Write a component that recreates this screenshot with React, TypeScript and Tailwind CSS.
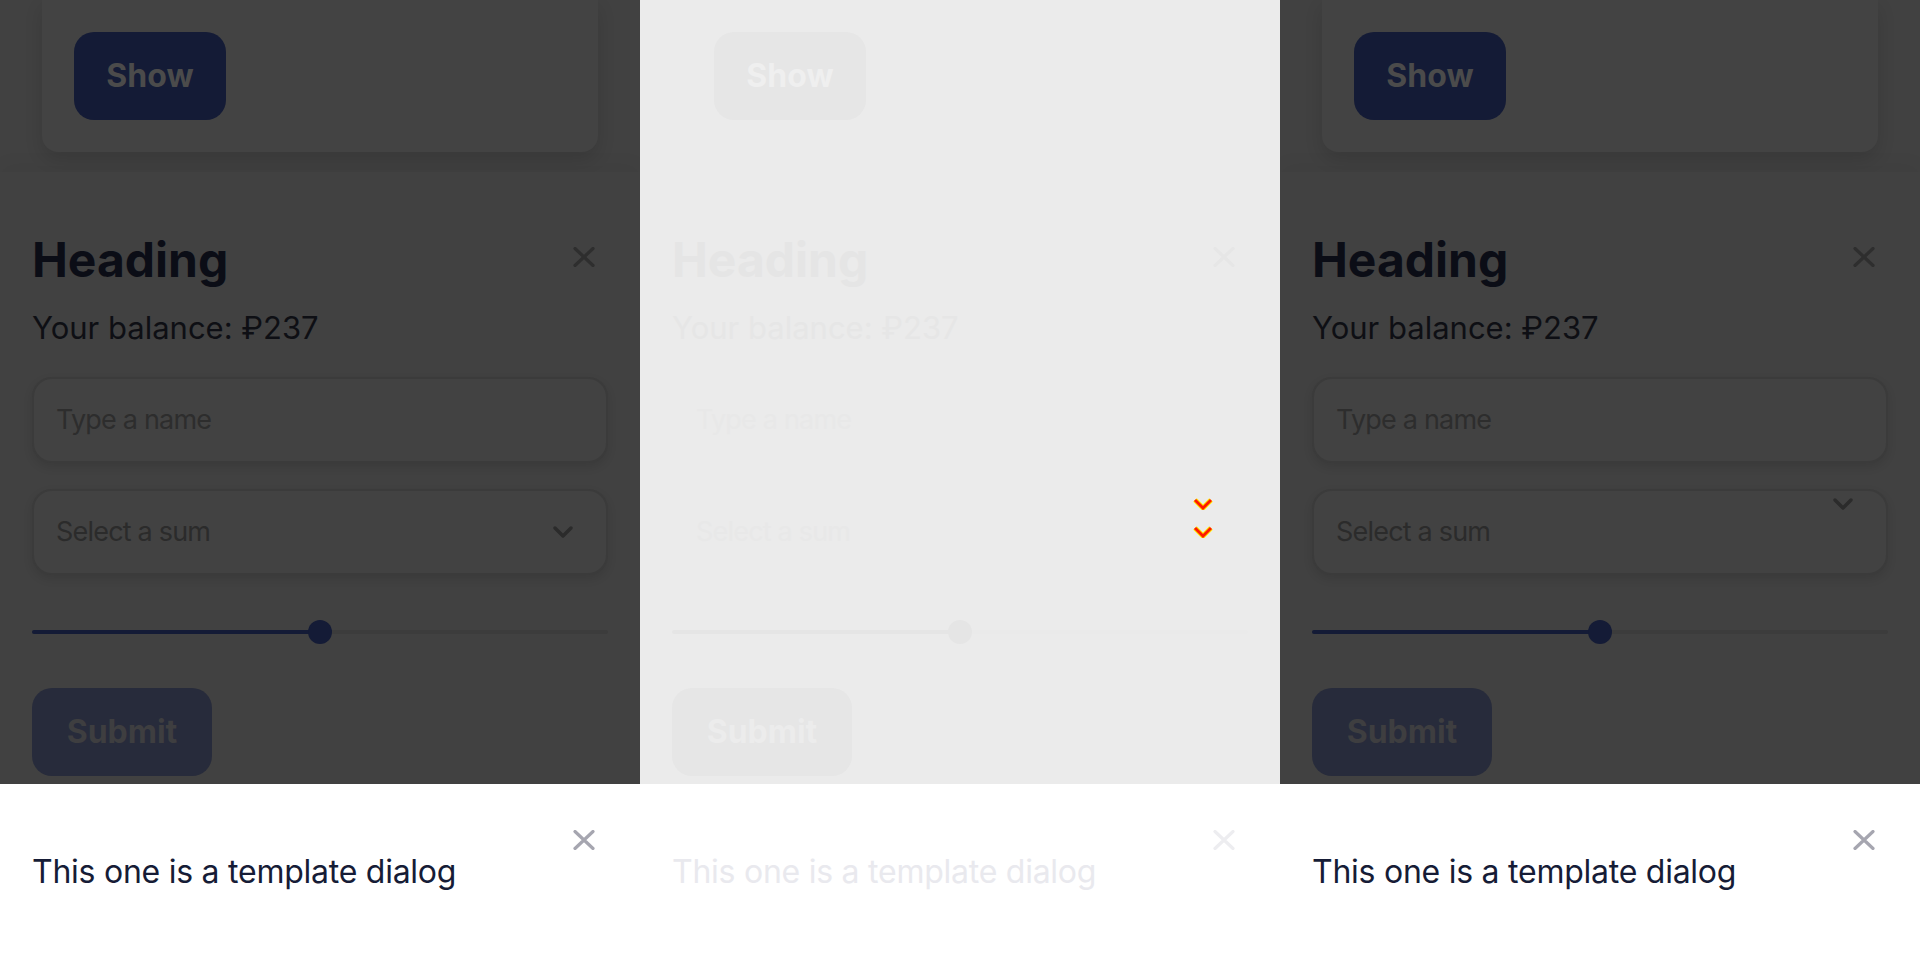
type Variant = "dark" | "diff";

function CloseIcon({ color }: { color: string }) {
  return (
    <svg width="22" height="20" viewBox="0 0 22 20" fill="none">
      <path d="M2 1.5 20 18.5M20 1.5 2 18.5" stroke={color} strokeWidth="3.2" strokeLinecap="round" />
    </svg>
  );
}

function Chevron({ color }: { color: string }) {
  return (
    <svg width="20" height="12" viewBox="0 0 20 12" fill="none">
      <path d="M2 2 10 10 18 2" stroke={color} strokeWidth="3.4" strokeLinecap="round" strokeLinejoin="round" />
    </svg>
  );
}

function DiffChevron() {
  return (
    <svg width="20" height="12" viewBox="0 0 20 12" fill="none">
      <path d="M2 2 10 10 18 2" stroke="#FFE800" strokeWidth="5" strokeLinejoin="miter" />
      <path d="M2 2 10 10 18 2" stroke="#FF1A00" strokeWidth="3" strokeLinejoin="miter" />
    </svg>
  );
}

function Column({ variant, chevronTop = false }: { variant: Variant; chevronTop?: boolean }) {
  const dark = variant === "dark";
  return (
    <div className="w-[640px] h-[960px] flex flex-col overflow-hidden">
      <div className={`h-[784px] flex flex-col ${dark ? "bg-[#414141]" : "bg-[#EBEBEB]"}`}>
        {/* card with show button, cut at top */}
        <div
          className={
            dark
              ? "mx-[42px] pt-8 pb-8 pl-8 bg-[#434343] rounded-b-[16px] shadow-[0_8px_18px_rgba(0,0,0,0.12)]"
              : "mx-[42px] pt-8 pb-8 pl-8"
          }
        >
          <button
            className={
              dark
                ? "h-[88px] w-[152px] rounded-[20px] bg-[#141B36] text-[32px] font-bold text-[#4B4B4B]"
                : "h-[88px] w-[152px] rounded-[20px] bg-[#E6E6E6] text-[32px] font-bold text-[#EFEFEF]"
            }
          >
            Show
          </button>
        </div>

        {/* bottom sheet */}
        <div
          className={
            dark
              ? "mt-[20px] flex-1 px-8 pt-[59px] bg-[#414141] shadow-[0_-6px_20px_rgba(0,0,0,0.04)] flex flex-col"
              : "mt-[20px] flex-1 px-8 pt-[59px] flex flex-col"
          }
        >
          <div className="flex items-start justify-between">
            <h2
              className={`h-[58px] text-[48px] leading-[58px] font-bold ${dark ? "text-[#0B0D16]" : "text-[#E5E5E5]"}`}
            >
              Heading
            </h2>
            <div className="mt-[16px] mr-[13px]">
              <CloseIcon color={dark ? "#2E2E2E" : "#E6E6E6"} />
            </div>
          </div>

          <p className={`mt-[21px] text-[31px] leading-[36px] ${dark ? "text-[#0E0F14]" : "text-[#E6E6E6]"}`}>
            Your balance: ₽237
          </p>

          <div
            className={
              dark
                ? "mt-[31px] h-[86px] rounded-[20px] border-2 border-[#3B3B3B] bg-[#424242] shadow-[0_4px_10px_rgba(0,0,0,0.1)] pl-[22px] flex items-center"
                : "mt-[31px] h-[86px] rounded-[20px] border-2 border-transparent pl-[22px] flex items-center"
            }
          >
            <span className={`text-[27px] tracking-[-0.8px] ${dark ? "text-[#2D2D2D]" : "text-[#E8E8E8]"}`}>
              Type a name
            </span>
          </div>

          <div
            className={
              dark
                ? "mt-[26px] h-[86px] rounded-[20px] border-2 border-[#3B3B3B] bg-[#424242] shadow-[0_4px_10px_rgba(0,0,0,0.1)] pl-[22px] pr-[33px] flex items-center justify-between"
                : "mt-[26px] h-[86px] rounded-[20px] border-2 border-transparent pl-[22px] pr-[33px] flex items-center justify-between"
            }
          >
            <span className={`text-[27px] tracking-[-0.8px] ${dark ? "text-[#2B2B2B]" : "text-[#E8E8E8]"}`}>
              Select a sum
            </span>
            {dark ? (
              <div className={chevronTop ? "self-start mt-[7px]" : ""}>
                <Chevron color="#2B2B2B" />
              </div>
            ) : (
              <div className="self-start mt-[7px] flex flex-col gap-[16px]">
                <DiffChevron />
                <DiffChevron />
              </div>
            )}
          </div>

          {/* slider */}
          <div className="mt-[45px] relative h-[24px] flex items-center">
            <div className={`w-full h-[4px] rounded-full ${dark ? "bg-[#3C3C3C]" : "bg-[#EAEAEA]"}`}>
              <div className={`w-1/2 h-full rounded-full ${dark ? "bg-[#141B36]" : "bg-[#E5E5E5]"}`} />
            </div>
            <div
              className={`absolute left-[calc(50%-12px)] w-[24px] h-[24px] rounded-full ${dark ? "bg-[#141B36]" : "bg-[#E5E5E5]"}`}
            />
          </div>

          <button
            className={
              dark
                ? "mt-[44px] h-[88px] w-[180px] rounded-[20px] bg-[#272B3B] text-[32px] font-bold text-[#3E3E40]"
                : "mt-[44px] h-[88px] w-[180px] rounded-[20px] bg-[#E6E6E6] text-[32px] font-bold text-[#ECECEC]"
            }
          >
            Submit
          </button>
        </div>
      </div>

      {/* template dialog */}
      <div className="h-[176px] bg-white px-8 pt-[46px] flex items-start justify-between">
        <p
          className={`mt-[22px] text-[32px] leading-[40px] tracking-[-0.25px] ${dark ? "text-[#161C36]" : "text-[#E9E9EE]"}`}
        >
          This one is a template dialog
        </p>
        <div className="mr-[13px]">
          <CloseIcon color={dark ? "#A6A6B0" : "#EDEDF0"} />
        </div>
      </div>
    </div>
  );
}

export default function App() {
  return (
    <div className="w-[1920px] h-[960px] flex overflow-hidden font-[Inter,sans-serif]">
      <Column variant="dark" />
      <Column variant="diff" />
      <Column variant="dark" chevronTop />
    </div>
  );
}
